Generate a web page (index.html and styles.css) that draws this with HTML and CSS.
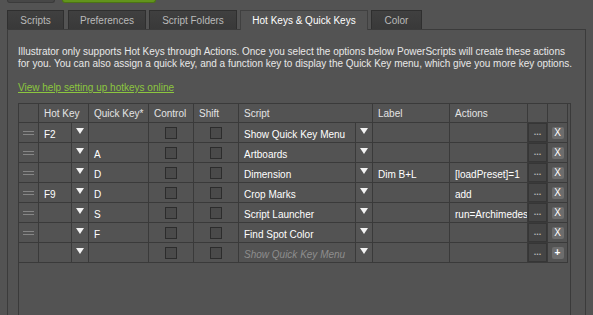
FILE: index.html
```html
<!DOCTYPE html>
<html>
<head>
<meta charset="utf-8">
<link rel="stylesheet" href="styles.css">
</head>
<body>
<div class="app">
  <div class="topbar"><span class="btn-grey"></span><span class="btn-green"></span></div>
  <div class="tabs">
    <div class="tab t-scripts">Scripts</div>
    <div class="tab t-prefs">Preferences</div>
    <div class="tab t-folders">Script Folders</div>
    <div class="tab t-hotkeys active">Hot Keys &amp; Quick Keys</div>
    <div class="tab t-color">Color</div>
  </div>
  <div class="panel">
    <p class="intro">Illustrator only supports Hot Keys through Actions. Once you select the options below PowerScripts will create these actions for you. You can also assign a quick key, and a function key to display the Quick Key menu, which give you more key options.</p>
    <a class="help" href="#">View help setting up hotkeys online</a>
    <div class="gridbox">
      <div class="grid">
        <div class="h"></div>
        <div class="h span2">Hot Key</div>
        <div class="h">Quick Key*</div>
        <div class="h">Control</div>
        <div class="h">Shift</div>
        <div class="h span2">Script</div>
        <div class="h">Label</div>
        <div class="h">Actions</div>
        <div class="h"></div>
        <div class="h"></div>

        <div class="c drag"><span class="grip"></span></div>
        <div class="c t">F2</div>
        <div class="c dd"><span class="tri"></span></div>
        <div class="c t"></div>
        <div class="c chk"><span class="cb"></span></div>
        <div class="c chk"><span class="cb"></span></div>
        <div class="c t">Show Quick Key Menu</div>
        <div class="c dd"><span class="tri"></span></div>
        <div class="c t"></div>
        <div class="c t"></div>
        <div class="c more">...</div>
        <div class="c btncell"><span class="xbtn">X</span></div>

        <div class="c drag"><span class="grip"></span></div>
        <div class="c t"></div>
        <div class="c dd"><span class="tri"></span></div>
        <div class="c t">A</div>
        <div class="c chk"><span class="cb"></span></div>
        <div class="c chk"><span class="cb"></span></div>
        <div class="c t">Artboards</div>
        <div class="c dd"><span class="tri"></span></div>
        <div class="c t"></div>
        <div class="c t"></div>
        <div class="c more">...</div>
        <div class="c btncell"><span class="xbtn">X</span></div>

        <div class="c drag"><span class="grip"></span></div>
        <div class="c t"></div>
        <div class="c dd"><span class="tri"></span></div>
        <div class="c t">D</div>
        <div class="c chk"><span class="cb"></span></div>
        <div class="c chk"><span class="cb"></span></div>
        <div class="c t">Dimension</div>
        <div class="c dd"><span class="tri"></span></div>
        <div class="c t">Dim B+L</div>
        <div class="c t">[loadPreset]=1</div>
        <div class="c more">...</div>
        <div class="c btncell"><span class="xbtn">X</span></div>

        <div class="c drag"><span class="grip"></span></div>
        <div class="c t">F9</div>
        <div class="c dd"><span class="tri"></span></div>
        <div class="c t">D</div>
        <div class="c chk"><span class="cb"></span></div>
        <div class="c chk"><span class="cb"></span></div>
        <div class="c t">Crop Marks</div>
        <div class="c dd"><span class="tri"></span></div>
        <div class="c t"></div>
        <div class="c t">add</div>
        <div class="c more">...</div>
        <div class="c btncell"><span class="xbtn">X</span></div>

        <div class="c drag"><span class="grip"></span></div>
        <div class="c t"></div>
        <div class="c dd"><span class="tri"></span></div>
        <div class="c t">S</div>
        <div class="c chk"><span class="cb"></span></div>
        <div class="c chk"><span class="cb"></span></div>
        <div class="c t">Script Launcher</div>
        <div class="c dd"><span class="tri"></span></div>
        <div class="c t"></div>
        <div class="c t">run=Archimedes</div>
        <div class="c more">...</div>
        <div class="c btncell"><span class="xbtn">X</span></div>

        <div class="c drag"><span class="grip"></span></div>
        <div class="c t"></div>
        <div class="c dd"><span class="tri"></span></div>
        <div class="c t">F</div>
        <div class="c chk"><span class="cb"></span></div>
        <div class="c chk"><span class="cb"></span></div>
        <div class="c t">Find Spot Color</div>
        <div class="c dd"><span class="tri"></span></div>
        <div class="c t"></div>
        <div class="c t"></div>
        <div class="c more">...</div>
        <div class="c btncell"><span class="xbtn">X</span></div>

        <div class="c drag"></div>
        <div class="c t"></div>
        <div class="c dd"><span class="tri"></span></div>
        <div class="c t"></div>
        <div class="c chk"><span class="cb"></span></div>
        <div class="c chk"><span class="cb"></span></div>
        <div class="c t ph">Show Quick Key Menu</div>
        <div class="c dd"><span class="tri"></span></div>
        <div class="c t"></div>
        <div class="c t"></div>
        <div class="c more">...</div>
        <div class="c btncell"><span class="xbtn plus">+</span></div>
      </div>
    </div>
  </div>
</div>
</body>
</html>
```
FILE: styles.css
```css
html, body {
  margin: 0;
  padding: 0;
}
body {
  background: #535353;
  font-family: "Liberation Sans", Arial, sans-serif;
  font-size: 10px;
  color: #e8e8e8;
  height: 315px;
  overflow: hidden;
}
.app {
  padding-left: 7px;
  height: 315px;
  overflow: hidden;
}
.topbar {
  display: flex;
  gap: 7px;
  height: 3px;
  margin-bottom: 7px;
}
.btn-grey {
  width: 48px;
  height: 3px;
  box-sizing: border-box;
  background: #474747;
  border: 1px solid #3b3b3b;
  border-top: 0;
  border-radius: 0 0 3px 3px;
}
.btn-green {
  width: 94px;
  height: 3px;
  box-sizing: border-box;
  background: #62941c;
  border: 1px solid #4c7414;
  border-top: 0;
  border-radius: 0 0 3px 3px;
}
.tabs {
  display: flex;
  gap: 3px;
  height: 19px;
  align-items: flex-start;
}
.tab {
  box-sizing: border-box;
  height: 19px;
  border: 1px solid #2f2f2f;
  border-bottom: 0;
  background: linear-gradient(#404040, #393939);
  color: #bababa;
  display: flex;
  align-items: center;
  justify-content: center;
  white-space: nowrap;
}
.tab.active {
  height: 20px;
  margin-bottom: -1px;
  background: #535353;
  color: #ffffff;
  border-color: #404040;
  position: relative;
  z-index: 1;
}
.t-scripts { width: 57px; }
.t-prefs { width: 78px; margin-left: 1px; }
.t-folders { width: 88px; }
.t-hotkeys { width: 128px; }
.t-color { width: 51px; }

.panel {
  box-sizing: border-box;
  width: 579px;
  height: 290px;
  overflow: hidden;
  border: 1px solid #3b3b3b;
  padding: 16px 4px 0 10px;
}
.intro {
  margin: 0;
  width: 559px;
  line-height: 12px;
  color: #e8e8e8;
}
.help {
  display: inline-block;
  margin-top: 12px;
  line-height: 12px;
  color: #8cc63f;
  text-decoration: underline;
}
.gridbox {
  box-sizing: border-box;
  margin-top: 9px;
  width: 553px;
  height: 240px;
  border: 1px solid #3a3a3a;
}
.grid {
  display: grid;
  grid-template-columns: 20px 33px 17px 60px 45px 45px 117px 17px 77px 78px 20px 20px;
  grid-template-rows: 19px;
  grid-auto-rows: 20px;
  width: 549px;
}
.h, .c {
  box-sizing: border-box;
  border-right: 1px solid #3a3a3a;
  border-bottom: 1px solid #3a3a3a;
  overflow: hidden;
  white-space: nowrap;
}
.h {
  display: flex;
  align-items: center;
  padding-left: 5px;
  color: #e4e4e4;
}
.span2 {
  grid-column: span 2;
}
.t {
  display: flex;
  align-items: center;
  padding: 3px 0 0 5px;
  color: #ffffff;
}
.ph {
  color: #8e8e8e;
  font-style: italic;
}
.drag {
  display: flex;
  justify-content: center;
  align-items: center;
  padding-top: 1px;
}
.grip {
  width: 11px;
  height: 4px;
  box-sizing: border-box;
  border-top: 1px solid #868686;
  border-bottom: 1px solid #868686;
}
.dd {
  display: flex;
  justify-content: center;
  align-items: flex-start;
  padding-top: 5px;
  background: #555555;
}
.tri {
  width: 0;
  height: 0;
  border-left: 4px solid transparent;
  border-right: 4px solid transparent;
  border-top: 6px solid #f2f2f2;
}
.chk {
  display: flex;
  justify-content: center;
  align-items: center;
}
.cb {
  width: 12px;
  height: 12px;
  box-sizing: border-box;
  border: 1px solid #2c2c2c;
  background: #4a4a4a;
}
.more {
  display: flex;
  justify-content: center;
  align-items: center;
  background: #454545;
  box-shadow: inset 0 0 0 1px #363636;
  color: #b5b5b5;
  font-size: 9px;
  font-weight: bold;
  padding-bottom: 2px;
}
.btncell {
  display: flex;
  justify-content: center;
  align-items: center;
}
.xbtn {
  width: 12px;
  height: 12px;
  border-radius: 2px;
  background: #6d6d6d;
  color: #ffffff;
  font-size: 10px;
  display: flex;
  align-items: center;
  justify-content: center;
}
.plus {
  font-weight: bold;
}
```
